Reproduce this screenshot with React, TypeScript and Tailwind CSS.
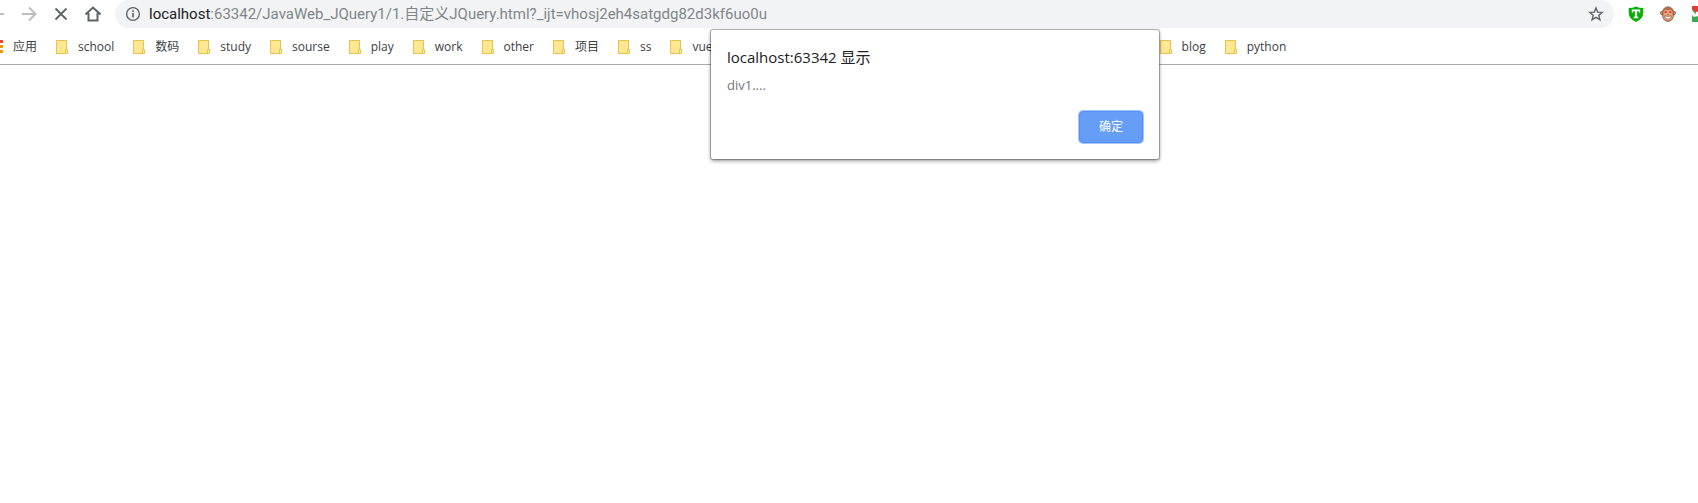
import type { ReactNode } from "react";

const leading = ["school", "数码", "study", "sourse", "play", "work", "other", "项目", "ss", "vue"];
const trailing = ["blog", "python"];

function Folder() {
  return (
    <svg className="h-4 w-3 shrink-0" viewBox="0 0 12 16" fill="none" aria-hidden="true">
      <path d="M0.5 1.5H10.5V14.5H0.5Z" fill="#ffe793" stroke="#e8c34a" />
      <path d="M9.5 10.5H11.5V14.5H9.5Z" fill="#fff0b3" stroke="#e8c34a" />
    </svg>
  );
}

function Bookmark({ label }: { label: string }) {
  return (
    <a href="#" className="flex shrink-0 items-center gap-[10px]">
      <Folder />
      <span>{label}</span>
    </a>
  );
}

function IconButton({ label, children }: { label: string; children: ReactNode }) {
  return (
    <button type="button" aria-label={label} className="flex size-4 shrink-0 items-center justify-center">
      {children}
    </button>
  );
}

export default function App() {
  return (
    <div className="relative min-h-screen overflow-hidden bg-white font-['Open_Sans','Noto_Sans_CJK_SC',sans-serif]">
      <header className="border-b border-[#a9a9a9]">
        <div className="flex h-7 items-center overflow-hidden">
          <nav className="flex shrink-0 items-center gap-4 pr-[14px] text-[#5f6368]">
            <button type="button" aria-label="后退" className="h-4 w-[5px] shrink-0">
              <svg className="h-4 w-[5px]" viewBox="11 0 5 16" aria-hidden="true">
                <path d="M2 8H15" stroke="#babcbe" strokeWidth="2" />
              </svg>
            </button>
            <IconButton label="前进">
              <svg className="size-4" viewBox="0 0 16 16" fill="none" stroke="#babcbe" strokeWidth="2" aria-hidden="true">
                <path d="M1 8H14M8 1.5L14.5 8L8 14.5" />
              </svg>
            </IconButton>
            <IconButton label="停止">
              <svg className="size-4" viewBox="0 0 16 16" fill="none" stroke="currentColor" strokeWidth="1.8" aria-hidden="true">
                <path d="M2.5 2.5L13.5 13.5M13.5 2.5L2.5 13.5" />
              </svg>
            </IconButton>
            <IconButton label="主页">
              <svg className="size-4" viewBox="0 0 16 16" fill="none" stroke="currentColor" strokeWidth="2" aria-hidden="true">
                <path d="M0.5 8.5L8 1.5L15.5 8.5M3.5 7V14.5H12.5V7" />
              </svg>
            </IconButton>
          </nav>
          <div className="flex h-7 min-w-0 flex-1 items-center gap-2 rounded-full bg-[#f1f3f4] pr-[10px] pl-[10px]">
            <IconButton label="网站信息">
              <svg className="size-4" viewBox="0 0 16 16" fill="none" stroke="#5f6368" aria-hidden="true">
                <circle cx="8" cy="8" r="6.4" strokeWidth="1.4" />
                <path d="M8 7V11.6M8 4.3V5.9" strokeWidth="1.6" />
              </svg>
            </IconButton>
            <div className="min-w-0 flex-1 truncate font-['Roboto','Noto_Sans_CJK_SC',sans-serif] text-[15px] leading-5 text-[#80868b]">
              <span className="text-[#202124]">localhost</span>
              :63342/JavaWeb_JQuery1/1.自定义JQuery.html?_ijt=vhosj2eh4satgdg82d3kf6uo0u
            </div>
            <IconButton label="添加书签">
              <svg className="size-4" viewBox="0 0 16 16" fill="none" stroke="#5f6368" strokeWidth="1.4" aria-hidden="true">
                <path d="M8 1.9L9.7 6.1L14.2 6.4L10.8 9.3L11.9 13.7L8 11.3L4.1 13.7L5.2 9.3L1.8 6.4L6.3 6.1Z" />
              </svg>
            </IconButton>
          </div>
          <div className="flex shrink-0 items-center gap-4 pl-[14px]">
            <IconButton label="扩展 T">
              <svg className="size-4" viewBox="0 0 16 16" aria-hidden="true">
                <path d="M0.7 2Q5 2 8 0.5Q11 2 15.3 2V7Q15 13 8 16Q1 13 0.7 7Z" fill="#06b006" />
                <path d="M3.8 3.5H12.2V6.5H10.8V5.3H9.1V10.8H10.3V12.2H5.7V10.8H6.9V5.3H5.2V6.5H3.8Z" fill="#fff" />
              </svg>
            </IconButton>
            <IconButton label="扩展 猴子">
              <svg className="size-4" viewBox="0 0 16 16" aria-hidden="true">
                <circle cx="2.2" cy="7" r="1.8" fill="#e5a57c" stroke="#7d5140" strokeWidth="0.8" />
                <circle cx="13.8" cy="7" r="1.8" fill="#e5a57c" stroke="#7d5140" strokeWidth="0.8" />
                <path d="M8 0.9C4 0.9 2.4 4 2.4 8C2.4 12.5 4.6 15.3 8 15.3S13.6 12.5 13.6 8C13.6 4 12 0.9 8 0.9Z" fill="#b9714a" stroke="#7d5140" strokeWidth="0.8" />
                <path d="M3.6 5Q6 3.2 8 4.6Q10 3.2 12.4 5V8L12.9 10.5Q11.5 14.6 8 14.6Q4.5 14.6 3.1 10.5L3.6 8Z" fill="#e9a980" />
                <path d="M4.6 6.2H6.8M9.2 6.2H11.4" stroke="#ee3327" strokeWidth="1.8" />
                <path d="M7.2 8.5H8.8" stroke="#9a5a3c" />
                <path d="M4.4 9.8Q8 11 11.6 9.8Q10.9 13.2 8 13.2Q5.1 13.2 4.4 9.8Z" fill="#fff" stroke="#8a4e32" strokeWidth="0.7" />
              </svg>
            </IconButton>
            <button type="button" aria-label="扩展" className="h-4 w-[6px] shrink-0">
              <svg className="h-4 w-[6px]" viewBox="0 0 6 16" aria-hidden="true">
                <path d="M0 0H6V16H0Z" fill="#38a852" />
                <path d="M0 0H6V8L0 3Z" fill="#e33b35" />
                <path d="M0 4L5 10L2 11L0 9Z" fill="#fff" />
                <circle cx="6" cy="8" r="2.5" fill="#fff" />
              </svg>
            </button>
          </div>
        </div>
        <div className="flex h-9 items-center gap-[19px] overflow-hidden pt-px text-xs text-[#3c4043]">
          <a href="#" className="flex shrink-0 items-center gap-[10px]">
            <svg className="h-4 w-[3px]" viewBox="0 0 3 16" aria-hidden="true">
              <path d="M0 1H3V4H0Z" fill="#ea4335" />
              <path d="M0 6H3V9H0ZM0 11H3V14H0Z" fill="#f29900" />
            </svg>
            应用
          </a>
          {leading.map((label) => (
            <Bookmark key={label} label={label} />
          ))}
          <div className="w-[409px] shrink-0" />
          {trailing.map((label) => (
            <Bookmark key={label} label={label} />
          ))}
        </div>
      </header>
      <main />
      <div
        role="alertdialog"
        aria-labelledby="alert-title"
        aria-describedby="alert-message"
        className="absolute top-[30px] left-[711px] w-[448px] rounded-xs bg-white p-4 shadow-[0_0_1px_1px_rgba(0,0,0,0.3),0_2px_4px_rgba(0,0,0,0.4)]"
      >
        <h1 id="alert-title" className="text-[15px] leading-[22px] text-[#202124]">localhost:63342 显示</h1>
        <p id="alert-message" className="mt-[7px] text-[13px] leading-5 text-[#70757a]">div1....</p>
        <div className="mt-4 flex justify-end">
          <button type="button" className="h-8 w-16 rounded-sm border border-[#5590f5] bg-[#669df6] text-xs text-white ring-1 ring-[#a8c7fa]">
            确定
          </button>
        </div>
      </div>
    </div>
  );
}
